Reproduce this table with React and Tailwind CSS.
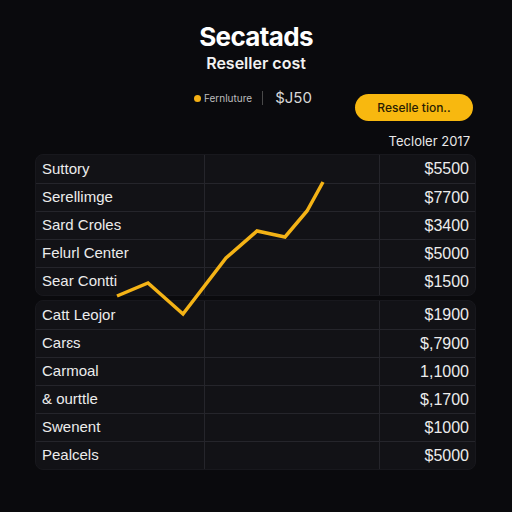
const top = [
    ['Suttory', '$5500'],
    ['Serellimge', '$7700'],
    ['Sard Croles', '$3400'],
    ['Felurl Center', '$5000'],
    ['Sear Contti', '$1500'],
];

const bottom = [
    ['Catt Leojor', '$1900'],
    ['Carɛs', '$,7900'],
    ['Carmoal', '1,1000'],
    ['& ourttle', '$,1700'],
    ['Swenent', '$1000'],
    ['Pealcels', '$5000'],
];

const Table = ({ rows }) => (
    <div className="w-[441px] rounded-lg bg-[#121216] border border-[#18181d] overflow-hidden">
        {rows.map(([name, amount], i) => (
            <div key={i} className={`flex h-[28px] items-center ${i > 0 ? 'border-t border-[#25252b]' : ''}`}>
                <div className="w-[168px] pl-[6px] text-[15px] text-[#ececec]">{name}</div>
                <div className="w-[175px] self-stretch border-l border-[#25252b]" />
                <div className="flex-1 self-stretch border-l border-[#25252b] flex items-center justify-end pr-[6px] text-[16px] text-[#ececec]">{amount}</div>
            </div>
        ))}
    </div>
);

export default function App() {
    return (
        <div className="relative w-[512px] h-[512px] bg-[#0a0a0d] overflow-hidden" style={{ fontFamily: 'Inter, "Liberation Sans", sans-serif' }}>
            {/* Header */}
            <div className="flex flex-col items-center pt-[21px]">
                <div className="text-[26px] leading-[32px] font-bold text-white tracking-tight">Secatads</div>
                <div className="mt-0 text-[16px] leading-[20px] font-semibold text-[#f2f2f2]">Reseller cost</div>
            </div>

            <div className="flex items-start mt-[12px] pl-[194px] pr-[39px]">
                <div className="flex items-center h-[26px]">
                    <span className="w-[7px] h-[7px] rounded-full bg-[#f5b014]" />
                    <span className="ml-[3px] text-[10px] text-[#bdbdbd]">Fernluture</span>
                    <span className="ml-[10px] w-px h-[14px] bg-[#4a4a4a]" />
                    <span className="ml-[12px] text-[15px] text-[#d8d8d8]">$J50</span>
                </div>
                <button className="ml-auto mt-[9px] w-[118px] h-[27px] rounded-full bg-[#f8b80f] text-[12px] font-medium text-[#2a1d02]">Reselle tion..</button>
            </div>

            <div className="flex justify-end pr-[42px] mt-[12px] text-[13px] leading-[16px] text-[#e8e8e8]">Tecloler 2017</div>

            <div className="flex flex-col items-start pl-[35px] mt-[5px] gap-[4px]" style={{ fontFamily: '"Liberation Sans", Arial, sans-serif' }}>
                <Table rows={top} />
                <Table rows={bottom} />
            </div>

            {/* Trend line overlay */}
            <svg className="absolute left-0 top-0 pointer-events-none" width="512" height="512">
                <polyline
                    points="117,296 148,283 183,314 226,258 257,231 285,237 307,211 323,182"
                    fill="none"
                    stroke="#f4b316"
                    strokeWidth="3.5"
                    strokeLinejoin="miter"
                />
            </svg>
        </div>
    );
}
